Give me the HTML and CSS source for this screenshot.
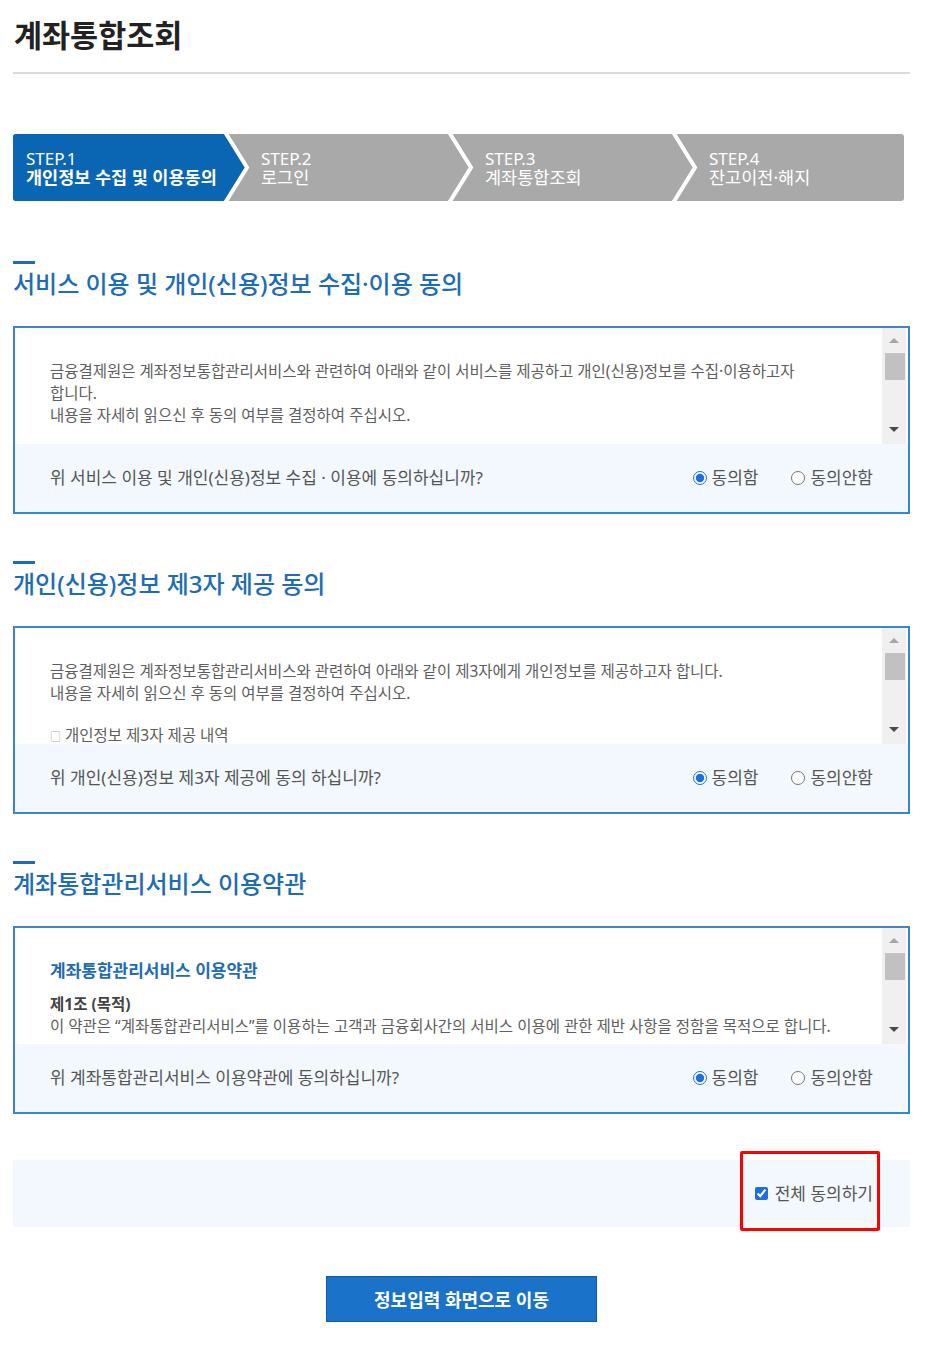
FILE: index.html
```html
<!DOCTYPE html>
<html lang="ko">
<head>
<meta charset="utf-8">
<title>계좌통합조회</title>
<link rel="stylesheet" href="styles.css">
</head>
<body>
<div class="page">
  <header class="page-head">
    <h1 class="page-title">계좌통합조회</h1>
  </header>

  <div class="steps">
    <svg class="steps-bg" width="891" height="67" viewBox="0 0 891 67" aria-hidden="true">
      <polygon points="0,0 213,0 234,33.5 213,67 0,67" fill="#0a66b3"/>
      <polyline points="212,-2 234,33.5 212,69" fill="none" stroke="#fff" stroke-width="4"/>
      <polyline points="436,-2 458,33.5 436,69" fill="none" stroke="#fff" stroke-width="4"/>
      <polyline points="660,-2 682,33.5 660,69" fill="none" stroke="#fff" stroke-width="4"/>
    </svg>
    <ol class="steps-list">
      <li class="step step-active"><span class="step-no">STEP.1</span><span class="step-name">개인정보 수집 및 이용동의</span></li>
      <li class="step"><span class="step-no">STEP.2</span><span class="step-name">로그인</span></li>
      <li class="step"><span class="step-no">STEP.3</span><span class="step-name">계좌통합조회</span></li>
      <li class="step step-last"><span class="step-no">STEP.4</span><span class="step-name">잔고이전·해지</span></li>
    </ol>
  </div>

  <section class="agree agree-first">
    <h2 class="agree-title">서비스 이용 및 개인(신용)정보 수집·이용 동의</h2>
    <div class="agree-box">
      <div class="agree-body">
        <div class="agree-text">
          <p>금융결제원은 계좌정보통합관리서비스와 관련하여 아래와 같이 서비스를 제공하고 개인(신용)정보를 수집·이용하고자<br>합니다.<br>내용을 자세히 읽으신 후 동의 여부를 결정하여 주십시오.</p>
        </div>
        <div class="scrollbar"><span class="sb-up"></span><span class="sb-thumb"></span><span class="sb-down"></span></div>
      </div>
      <div class="agree-q">
        <p class="q-text">위 서비스 이용 및 개인(신용)정보 수집 · 이용에 동의하십니까?</p>
        <div class="q-opts">
          <label class="opt"><input type="radio" name="agree1" checked>동의함</label>
          <label class="opt"><input type="radio" name="agree1">동의안함</label>
        </div>
      </div>
    </div>
  </section>

  <section class="agree">
    <h2 class="agree-title">개인(신용)정보 제3자 제공 동의</h2>
    <div class="agree-box">
      <div class="agree-body">
        <div class="agree-text">
          <p>금융결제원은 계좌정보통합관리서비스와 관련하여 아래와 같이 제3자에게 개인정보를 제공하고자 합니다.<br>내용을 자세히 읽으신 후 동의 여부를 결정하여 주십시오.</p>
          <p class="sub-item"><span class="box-mark">□</span> 개인정보 제3자 제공 내역</p>
        </div>
        <div class="scrollbar"><span class="sb-up"></span><span class="sb-thumb"></span><span class="sb-down"></span></div>
      </div>
      <div class="agree-q">
        <p class="q-text">위 개인(신용)정보 제3자 제공에 동의 하십니까?</p>
        <div class="q-opts">
          <label class="opt"><input type="radio" name="agree2" checked>동의함</label>
          <label class="opt"><input type="radio" name="agree2">동의안함</label>
        </div>
      </div>
    </div>
  </section>

  <section class="agree">
    <h2 class="agree-title">계좌통합관리서비스 이용약관</h2>
    <div class="agree-box">
      <div class="agree-body">
        <div class="agree-text">
          <h3 class="terms-title">계좌통합관리서비스 이용약관</h3>
          <p class="terms-article">제1조 (목적)</p>
          <p>이 약관은 “계좌통합관리서비스”를 이용하는 고객과 금융회사간의 서비스 이용에 관한 제반 사항을 정함을 목적으로 합니다.</p>
        </div>
        <div class="scrollbar"><span class="sb-up"></span><span class="sb-thumb"></span><span class="sb-down"></span></div>
      </div>
      <div class="agree-q">
        <p class="q-text">위 계좌통합관리서비스 이용약관에 동의하십니까?</p>
        <div class="q-opts">
          <label class="opt"><input type="radio" name="agree3" checked>동의함</label>
          <label class="opt"><input type="radio" name="agree3">동의안함</label>
        </div>
      </div>
    </div>
  </section>

  <div class="agree-all">
    <label class="agree-all-label"><input type="checkbox" checked>전체 동의하기</label>
  </div>

  <div class="actions">
    <button type="button" class="btn-next">정보입력 화면으로 이동</button>
  </div>
</div>
</body>
</html>
```

FILE: styles.css
```css
* {
  box-sizing: border-box;
}

html, body {
  margin: 0;
  padding: 0;
  background: #fff;
}

body {
  font-family: "Noto Sans", "Noto Sans CJK KR", sans-serif;
  color: #555;
}

.page {
  width: 897px;
  margin-left: 13px;
  padding-bottom: 39px;
}

/* page header */
.page-head {
  padding-top: 15px;
  padding-bottom: 17px;
  border-bottom: 2px solid #dcdcdc;
}

.page-title {
  margin: 0;
  padding-left: 1px;
  font-size: 30.5px;
  line-height: 40px;
  font-weight: 700;
  color: #222;
}

/* step indicator */
.steps {
  position: relative;
  width: 891px;
  height: 67px;
  margin-top: 60px;
  background: #a9a9a9;
  border-radius: 3px;
  overflow: hidden;
}

.steps-bg {
  position: absolute;
  left: 0;
  top: 0;
}

.steps-list {
  position: relative;
  display: flex;
  height: 100%;
  margin: 0;
  padding: 0;
  list-style: none;
}

.step {
  flex: 0 0 224px;
  display: flex;
  flex-direction: column;
  justify-content: center;
  padding-left: 13px;
  color: #fff;
  font-size: 17px;
  line-height: 19px;
}

.step-active {
  flex-basis: 235px;
}

.step-last {
  flex: 1 1 auto;
}

.step-name {
  font-size: 17.5px;
}

.step-active .step-name {
  font-weight: 700;
}

/* agreement sections */
.agree {
  margin-top: 47px;
}

.agree-first {
  margin-top: 60px;
}

.agree-title {
  margin: 0 0 27px;
  font-size: 24px;
  line-height: 30px;
  font-weight: 500;
  color: #1d6cb4;
}

.agree-title::before {
  content: "";
  display: block;
  width: 22px;
  height: 3px;
  margin-bottom: 5px;
  background: #1d6cb4;
}

.agree-box {
  border: 2px solid #3a86c9;
}

.agree-body {
  display: flex;
  height: 116px;
  background: #fff;
}

.agree-text {
  flex: 1 1 auto;
  min-width: 0;
  overflow: hidden;
  padding: 32px 0 0 35px;
  font-size: 15.5px;
  line-height: 22px;
  color: #5e5e5e;
}

.agree-text p {
  margin: 0;
  white-space: nowrap;
}

.agree-text .sub-item {
  margin-top: 20px;
}

.box-mark {
  font-size: 11px;
  color: #b9a9ad;
}

.terms-title {
  margin: 0 0 11px;
  font-size: 17px;
  line-height: 22px;
  font-weight: 700;
  color: #1d6cb4;
}

.agree-text .terms-article {
  font-weight: 700;
  color: #444;
}

/* drawn scrollbar of the text panel */
.scrollbar {
  flex: 0 0 24px;
  margin-right: 2px;
  display: flex;
  flex-direction: column;
  align-items: center;
  padding: 10px 0 12px;
  background: #f0f0f0;
}

.sb-up,
.sb-down {
  width: 0;
  height: 0;
  border-left: 5px solid transparent;
  border-right: 5px solid transparent;
}

.sb-up {
  border-bottom: 5px solid #a6a6a6;
}

.sb-down {
  margin-top: auto;
  border-top: 5px solid #4a4a4a;
}

.sb-thumb {
  align-self: flex-end;
  width: 20px;
  height: 27px;
  margin: 10px 1px 0 0;
  background: #c1c1c1;
}

/* question row */
.agree-q {
  display: flex;
  align-items: center;
  justify-content: space-between;
  height: 68px;
  padding: 0 35px;
  background: #f2f8fd;
}

.q-text {
  margin: 0;
  font-size: 17px;
  line-height: 22px;
  color: #555;
}

.q-opts {
  display: flex;
  gap: 33px;
}

.opt {
  display: inline-flex;
  align-items: center;
  font-size: 17px;
  line-height: 22px;
  color: #555;
}

.opt input {
  width: 14px;
  height: 14px;
  margin: 0 5px 0 0;
  accent-color: #1a6fe3;
}

/* agree-all row */
.agree-all {
  display: flex;
  justify-content: flex-end;
  align-items: center;
  height: 67px;
  margin-top: 46px;
  padding-right: 37px;
  background: #f2f8fd;
}

.agree-all-label {
  position: relative;
  display: inline-flex;
  align-items: center;
  font-size: 17px;
  line-height: 22px;
  color: #555;
}

.agree-all-label input {
  width: 13px;
  height: 13px;
  margin: 0 7px 0 0;
  accent-color: #1a6fe3;
}

.agree-all-label::after {
  content: "";
  position: absolute;
  left: -15px;
  right: -7px;
  top: -32px;
  bottom: -26px;
  border: 3px solid #f00;
  border-radius: 2px;
  pointer-events: none;
}

/* primary action */
.actions {
  display: flex;
  justify-content: center;
  margin-top: 49px;
}

.btn-next {
  width: 271px;
  height: 46px;
  border: 1px solid #0d5ca9;
  background: #1b72c9;
  color: #fff;
  font-family: inherit;
  font-size: 18px;
  font-weight: 700;
  cursor: pointer;
}
```
